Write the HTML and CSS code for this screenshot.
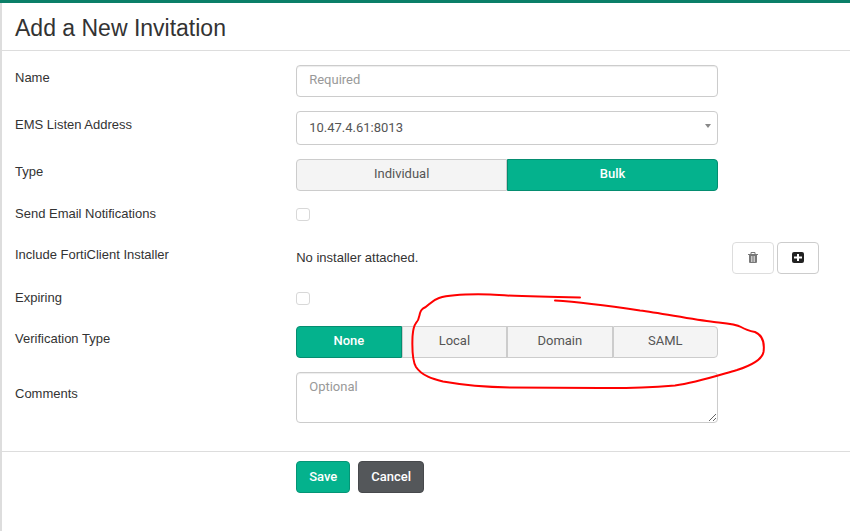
FILE: index.html
```html
<!DOCTYPE html>
<html lang="en">
<head>
    <meta charset="UTF-8">
    <meta name="viewport" content="width=device-width, initial-scale=1.0">
    <title>Add a New Invitation</title>
    <link rel="stylesheet" href="styles.css">
</head>
<body>

<main class="page">
    <h1 class="page-title">Add a New Invitation</h1>

    <form class="invitation-form">
        <div class="form-rows">
            <div class="form-row">
                <label class="row-label" for="name">Name</label>
                <input class="form-control" type="text" id="name" placeholder="Required">
            </div>

            <div class="form-row">
                <label class="row-label row-label-select" for="address">EMS Listen Address</label>
                <div class="select-wrap">
                    <select class="form-control select-control" id="address">
                        <option>10.47.4.61:8013</option>
                    </select>
                    <svg class="caret" viewBox="0 0 6 4" width="6" height="4" aria-hidden="true"><path d="M0 0h6L3 4z" fill="#888"/></svg>
                </div>
            </div>

            <div class="form-row">
                <span class="row-label" id="typeLabel">Type</span>
                <div class="btn-group" role="group" aria-labelledby="typeLabel">
                    <button class="btn-toggle" type="button" aria-pressed="false">Individual</button>
                    <button class="btn-toggle active" type="button" aria-pressed="true">Bulk</button>
                </div>
            </div>

            <div class="form-row check-row">
                <label class="row-label" for="sendEmail">Send Email Notifications</label>
                <input class="checkbox" type="checkbox" id="sendEmail">
            </div>

            <div class="form-row installer-row">
                <span class="row-label">Include FortiClient Installer</span>
                <span class="installer-text">No installer attached.</span>
                <div class="installer-actions">
                    <button class="btn-icon" type="button" aria-label="Remove installer" disabled>
                        <svg viewBox="0 0 12 12" width="12" height="12" aria-hidden="true">
                            <path d="M4 2V0.500h4V2" fill="none" stroke="#333"/>
                            <path d="M1 2h10v1H1zM2 3h8v7q0 1-1 1H3q-1 0-1-1z" fill="#333"/>
                            <path d="M4.500 4v6M6 4v6M7.500 4v6" stroke="#fff" stroke-width=".6"/>
                        </svg>
                    </button>
                    <button class="btn-icon" type="button" aria-label="Add installer">
                        <svg viewBox="0 0 12 12" width="12" height="12" aria-hidden="true">
                            <rect x="0" y="0" width="12" height="11" rx="2" fill="#222"/>
                            <path d="M6 2v7M2 5.500h8" stroke="#fff" stroke-width="2"/>
                        </svg>
                    </button>
                </div>
            </div>

            <div class="form-row check-row">
                <label class="row-label" for="expiring">Expiring</label>
                <input class="checkbox" type="checkbox" id="expiring">
            </div>

            <div class="form-row">
                <span class="row-label" id="verificationLabel">Verification Type</span>
                <div class="btn-group" role="group" aria-labelledby="verificationLabel">
                    <button class="btn-toggle active" type="button" aria-pressed="true">None</button>
                    <button class="btn-toggle" type="button" aria-pressed="false">Local</button>
                    <button class="btn-toggle" type="button" aria-pressed="false">Domain</button>
                    <button class="btn-toggle" type="button" aria-pressed="false">SAML</button>
                    <!-- hand drawn marker around the verification options -->
                    <svg class="marker" viewBox="410 292 360 100" width="360" height="100" aria-hidden="true">
                        <path d="M580 297.500C550 297 510 296 490 294.500C470 294 452 294 439 298C430 301 429 306 423 308.500C418 312 421 318 416 323C413 327 413 331 412.500 337C412 350 413 362 416 367C422 376 433 379 443 381.500C460 384.500 482 387 510 387.500L600 388C630 388.500 655 387 675 385.500C695 383 716 376 737 370C751 365.500 762 360 763.500 352C765 341 762 335 755 332C750 331 746 330 741 327C736 324 728 323.500 714 322C690 319 660 313 640 310.500C610 306 580 302 555 300.500"/>
                    </svg>
                </div>
            </div>

            <div class="form-row">
                <label class="row-label row-label-comments" for="comments">Comments</label>
                <textarea class="form-control comments" id="comments" placeholder="Optional"></textarea>
            </div>
        </div>

        <div class="form-footer">
            <div class="form-actions">
                <button class="btn btn-save" type="submit">Save</button>
                <button class="btn btn-cancel" type="button">Cancel</button>
            </div>
        </div>
    </form>
</main>

</body>
</html>
```
FILE: styles.css
```css
* {
    box-sizing: border-box;
}
body {
    margin: 0;
    min-height: 100vh;
    display: flex;
    flex-direction: column;
    border-top: 3px solid #0b7f68;
    background-color: #fff;
    color: #333;
    font-family: "Liberation Sans", Arial, sans-serif;
    font-size: 13px;
    line-height: 18px;
}
button, input, select, textarea {
    font-family: Roboto, sans-serif;
    font-size: 13px;
    line-height: 18px;
}
.page {
    flex: 1;
    border-left: 2px solid #ddd;
}
.page-title {
    margin: 0;
    padding: 12px 13px 8px;
    border-bottom: 1px solid #ddd;
    font-size: 23px;
    font-weight: normal;
    line-height: 27px;
}
.form-rows {
    display: grid;
    gap: 14px;
    padding: 14px 0 28px;
}
.form-row, .form-footer {
    display: grid;
    grid-template-columns: 2fr 3fr 132px;
    align-items: start;
    padding-left: 13px;
}
.row-label {
    padding-top: 4px;
}
.row-label-select {
    padding-top: 5px;
}
.row-label-comments {
    padding-top: 13px;
}
.form-control {
    display: block;
    width: 100%;
    height: 32px;
    margin: 0;
    padding: 4px 12px 8px;
    border: 1px solid #ccc;
    border-radius: 4px;
    background-color: #fff;
    color: #555;
    box-shadow: inset 0 1px 1px rgba(0, 0, 0, 0.075);
}
.form-control::placeholder {
    color: #999;
}
.select-wrap {
    position: relative;
}
.select-control {
    height: 34px;
    padding: 7px 12px;
    appearance: none;
    box-shadow: none;
}
.caret {
    position: absolute;
    right: 7px;
    top: 13px;
    pointer-events: none;
}
.btn-group {
    position: relative;
    display: flex;
}
.btn-toggle {
    flex: 1;
    height: 32px;
    padding: 5px 0 7px;
    border: 1px solid #ccc;
    background-color: #f4f4f4;
    color: #555;
    cursor: pointer;
}
.btn-toggle:first-of-type {
    border-radius: 4px 0 0 4px;
}
.btn-toggle:last-of-type {
    border-radius: 0 4px 4px 0;
}
.btn-toggle.active {
    background-color: #04b28d;
    border-color: #048d70;
    color: #fff;
    font-weight: 500;
}
.marker {
    position: absolute;
    left: 114px;
    top: -34px;
    fill: none;
    stroke: #f00;
    stroke-width: 2;
    stroke-linecap: round;
    stroke-linejoin: round;
    pointer-events: none;
}
.check-row {
    min-height: 23px;
}
.check-row .row-label {
    padding-top: 0;
}
.checkbox {
    appearance: none;
    width: 14px;
    height: 13px;
    margin: 3px 0 0;
    border: 1px solid #d8d8d8;
    border-radius: 3px;
    background-color: #fff;
}
.checkbox:checked {
    background-color: #04b28d;
}
.installer-row {
    min-height: 33px;
}
.installer-text {
    padding-top: 7px;
}
.installer-actions {
    display: flex;
    gap: 3px;
    padding-left: 14px;
}
.btn-icon {
    display: flex;
    align-items: center;
    justify-content: center;
    width: 42px;
    height: 32px;
    padding: 0;
    border: 1px solid #ccc;
    border-radius: 4px;
    background-color: #fff;
}
.btn-icon:disabled {
    opacity: 0.65;
}
.comments {
    height: 51px;
    padding-top: 5px;
    resize: both;
}
.form-footer {
    padding-top: 9px;
    border-top: 1px solid #ddd;
}
.form-actions {
    grid-column: 2;
    display: flex;
    gap: 8px;
}
.btn {
    padding: 6px 12px;
    border: 1px solid #049576;
    border-radius: 4px;
    background-color: #04b28d;
    color: #fff;
    font-weight: 500;
    cursor: pointer;
}
.btn-cancel {
    border-color: #47494c;
    background-color: #54575a;
}
```
